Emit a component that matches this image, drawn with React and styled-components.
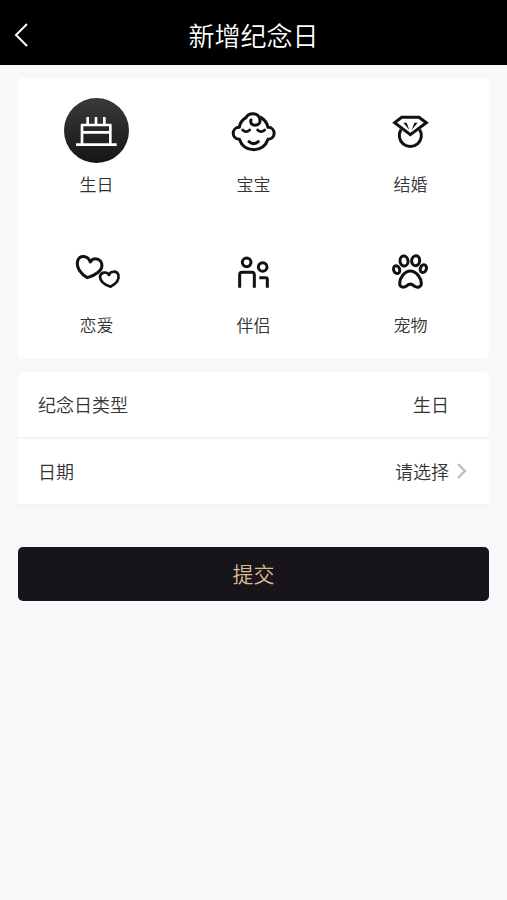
import React, { useState } from 'react';
import styled, { createGlobalStyle } from 'styled-components';

const GlobalStyle = createGlobalStyle`
  * {
    box-sizing: border-box;
  }

  body {
    margin: 0;
    background-color: #f6f8fa;
    color: #333333;
    font-family: "Noto Sans CJK SC", sans-serif;
    font-weight: 350;
  }

  button {
    border: none;
    padding: 0;
    background: none;
    color: inherit;
    font-family: inherit;
    font-weight: inherit;
    cursor: pointer;
  }
`;

const Header = styled.header`
  display: grid;
  grid-template-columns: 44px 1fr 44px;
  align-items: center;
  height: 65px;
  padding-top: 4px;
  background-color: #000000;
  color: #ffffff;
`;

const BackButton = styled.button`
  display: flex;
  align-items: center;
  height: 44px;
  padding-left: 14px;
`;

const Title = styled.h1`
  margin: 0;
  font-size: 26px;
  font-weight: 350;
  line-height: 38px;
  text-align: center;
`;

const Content = styled.form`
  display: flex;
  flex-direction: column;
  gap: 13px;
  padding: 13px 18px;
`;

const Card = styled.section`
  background-color: #ffffff;
  border-radius: 5px;
`;

const TypeGrid = styled(Card)`
  display: grid;
  grid-template-columns: repeat(3, 1fr);
  row-gap: 42px;
  padding: 20px 0 21px;
`;

const TypeButton = styled.button`
  display: flex;
  flex-direction: column;
  align-items: center;
  gap: 9px;
  padding-bottom: 1px;
  font-size: 17px;
  line-height: 24px;
`;

const IconCircle = styled.span`
  width: 65px;
  height: 65px;
  border-radius: 50%;
  background: ${({ $active }) => ($active ? 'linear-gradient(#3a3a3a, #161616)' : 'transparent')};
  color: ${({ $active }) => ($active ? '#ffffff' : '#111111')};

  svg {
    display: block;
    width: 100%;
    height: 100%;
  }
`;

const Row = styled.div`
  display: flex;
  align-items: center;
  justify-content: space-between;
  height: 67px;
  padding: 0 22px 2px 20px;
  border-bottom: 2px solid #f3f4f5;
  font-size: 18px;
  line-height: 26px;
`;

const Value = styled.output`
  padding-right: 18px;
`;

const PickButton = styled.button`
  display: flex;
  align-items: center;
  gap: 8px;
  font-size: 18px;
  line-height: 26px;
`;

const SubmitButton = styled.button`
  height: 54px;
  margin-top: 28px;
  padding-bottom: 2px;
  border-radius: 5px;
  background-color: #18151a;
  color: #dcbb93;
  font-size: 21px;
  line-height: 30px;
`;

const Drawing = ({ viewBox, children }) => (
    <svg viewBox={viewBox} fill="none" stroke="currentColor" strokeWidth="9" strokeLinejoin="round" aria-hidden="true">
        {children}
    </svg>
);

const CakeIcon = () => (
    <Drawing viewBox="26 23 195 195">
        <g strokeWidth="8">
            <path d="M97 80V104M122 80V104M147 80V104" />
            <path d="M80 163V104H165V163M80 126H165" />
            <path d="M62 163H184" />
        </g>
    </Drawing>
);

const BabyIcon = () => (
    <Drawing viewBox="18 8 195 195">
        <g strokeLinecap="round">
            <path d="M108 74C105 83 111 90 120 90C130 90 136 83 135 74C133 61 124 55 114 55C103 55 96 60 93 67C82 73 75 84 73 96C49 96 48 131 73 132C80 152 96 163 116 163C136 163 152 152 159 132C184 131 183 96 159 96C156 82 148 72 137 66" />
            <path d="M83 104Q93 114 104 104M128 104Q138 114 149 104" strokeWidth="8" />
            <path d="M102 139Q116 151 130 139" />
        </g>
    </Drawing>
);

const RingIcon = () => (
    <Drawing viewBox="23 8 195 195">
        <path d="M92 103A33 33 0 1 0 148 103" />
        <path d="M94 66H146L168 82L120 118L73 82Z" strokeLinejoin="miter" />
        <path d="M99 82H109L117 104ZM142 82H132L124 104Z" fill="currentColor" stroke="none" />
    </Drawing>
);

const HeartsIcon = () => (
    <Drawing viewBox="12 -3 195 195">
        <path d="M91 66C84 46 60 43 53 62C47 84 66 104 82 113C103 107 131 92 125 70C120 54 99 52 91 66Z" />
        <path d="M147 105C140 93 122 96 120 110C120 125 137 135 152 140C165 133 179 120 175 104C171 92 151 92 147 105Z" strokeWidth="8" />
    </Drawing>
);

const CoupleIcon = () => (
    <Drawing viewBox="17 -3 195 195">
        <circle cx="94" cy="67" r="13" />
        <circle cx="142" cy="81" r="13" />
        <path d="M73 143V104Q73 97 80 97H110Q117 97 117 104V143" />
        <path d="M132 113H151Q156 113 156 118V143" />
    </Drawing>
);

const PawIcon = () => (
    <Drawing viewBox="23 -3 195 195">
        <ellipse cx="79" cy="89" rx="9" ry="12" transform="rotate(-20 79 89)" />
        <ellipse cx="101" cy="63" rx="12" ry="15" transform="rotate(-8 101 63)" />
        <ellipse cx="136" cy="62" rx="12" ry="15" transform="rotate(8 136 62)" />
        <ellipse cx="159" cy="86" rx="9" ry="12" transform="rotate(20 159 86)" />
        <path d="M120 93C102 93 88 115 88 130C88 142 99 144 107 139Q120 126 133 139C141 144 153 142 153 130C153 115 138 93 120 93Z" />
    </Drawing>
);

const types = [
    { name: '生日', Icon: CakeIcon },
    { name: '宝宝', Icon: BabyIcon },
    { name: '结婚', Icon: RingIcon },
    { name: '恋爱', Icon: HeartsIcon },
    { name: '伴侣', Icon: CoupleIcon },
    { name: '宠物', Icon: PawIcon },
];

const App = () => {
    const [selected, setSelected] = useState('生日');

    const handleSubmit = (e) => {
        e.preventDefault();
    };

    return (
        <>
            <GlobalStyle />
            <Header>
                <BackButton type="button" aria-label="返回">
                    <svg width="15" height="26" viewBox="0 0 15 26" fill="none" stroke="currentColor" strokeWidth="2" aria-hidden="true">
                        <path d="M13 2L2 13L13 24" />
                    </svg>
                </BackButton>
                <Title>新增纪念日</Title>
            </Header>
            <Content onSubmit={handleSubmit}>
                <TypeGrid>
                    {types.map(({ name, Icon }) => (
                        <TypeButton
                            key={name}
                            type="button"
                            aria-pressed={selected === name}
                            onClick={() => setSelected(name)}
                        >
                            <IconCircle $active={selected === name}>
                                <Icon />
                            </IconCircle>
                            {name}
                        </TypeButton>
                    ))}
                </TypeGrid>
                <Card>
                    <Row>
                        <label htmlFor="type">纪念日类型</label>
                        <Value id="type">{selected}</Value>
                    </Row>
                    <Row>
                        <label htmlFor="date">日期</label>
                        <PickButton id="date" type="button">
                            请选择
                            <svg width="10" height="16" viewBox="0 0 10 16" fill="none" stroke="#b8b8b8" strokeWidth="2" aria-hidden="true">
                                <path d="M1 1L8 8L1 15" />
                            </svg>
                        </PickButton>
                    </Row>
                </Card>
                <SubmitButton type="submit">提交</SubmitButton>
            </Content>
        </>
    );
};

export default App;
